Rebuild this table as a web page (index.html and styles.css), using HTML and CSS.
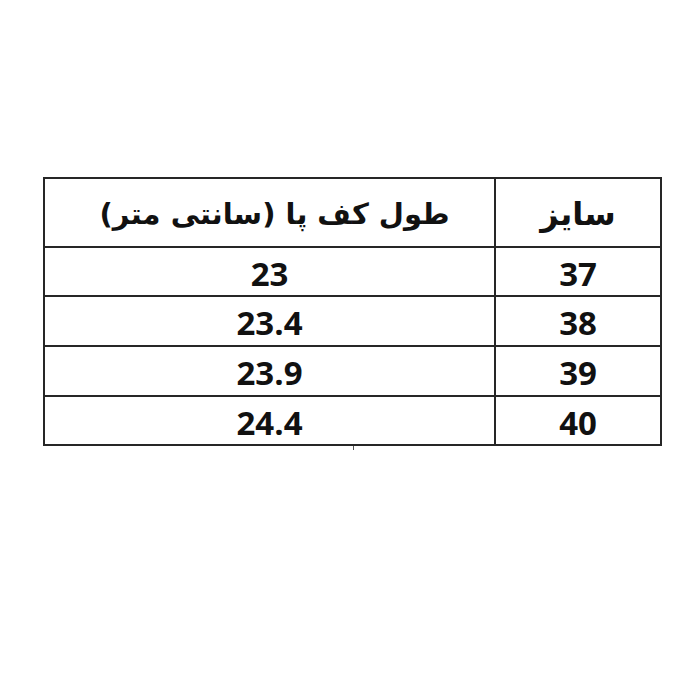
FILE: index.html
```html
<!DOCTYPE html>
<html lang="fa">
<head>
<meta charset="utf-8">
<title>جدول سایز</title>
<link rel="stylesheet" href="styles.css">
</head>
<body>
<main class="page">
  <div class="size-table" dir="rtl">
    <div class="cell head size-head">سایز</div>
    <div class="cell head len-head">طول کف پا (سانتی متر)</div>
    <div class="cell num">37</div>
    <div class="cell num">23</div>
    <div class="cell num">38</div>
    <div class="cell num">23.4</div>
    <div class="cell num">39</div>
    <div class="cell num">23.9</div>
    <div class="cell num">40</div>
    <div class="cell num">24.4</div>
  </div>
</main>
</body>
</html>
```

FILE: styles.css
```css
html, body {
  margin: 0;
  padding: 0;
  background: #ffffff;
}

.page {
  width: 690px;
  height: 690px;
  box-sizing: border-box;
  padding-top: 177px;
  padding-left: 43px;
}

.size-table {
  position: relative;
  width: 619px;
  box-sizing: border-box;
  display: grid;
  grid-template-columns: 164px 449px;
  grid-template-rows: 67px 47px 48px 48px 47px;
  gap: 2px;
  padding: 2px;
  background: #262626;
}

.size-table::after {
  content: "";
  position: absolute;
  left: 310px;
  top: 269px;
  width: 1px;
  height: 4px;
  background: #555;
}

.cell {
  background: #ffffff;
  display: flex;
  align-items: center;
  justify-content: center;
  color: #111;
}

.head {
  font-family: "DejaVu Sans", sans-serif;
  font-size: 32px;
  font-weight: 700;
  padding-top: 2px;
}

.len-head {
  font-size: 29px;
  padding-left: 10px;
}

.num {
  font-family: "Open Sans", "Noto Sans", sans-serif;
  font-weight: 700;
  font-size: 33px;
  padding-top: 3px;
  direction: ltr;
}
```
